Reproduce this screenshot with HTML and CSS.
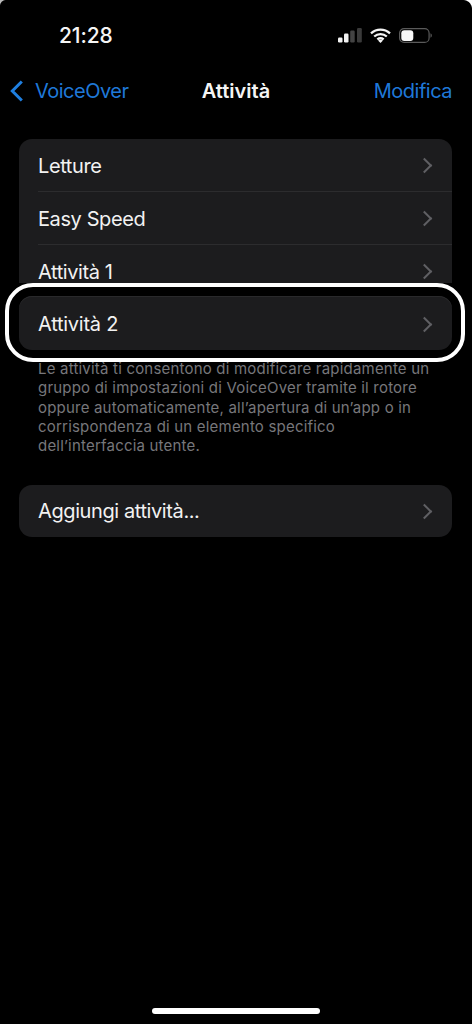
FILE: index.html
```html
<!DOCTYPE html>
<html lang="it">
<head>
<meta charset="utf-8">
<title>Attività</title>
<link rel="stylesheet" href="styles.css">
</head>
<body>
<div class="screen">
  <header class="status">
    <span class="time">21:28</span>
    <div class="status-icons">
      <svg width="24" height="15" viewBox="0 0 24 15"><rect x="0" y="9.500" width="4.500" height="5" rx="1.200" fill="#f2f2f2"/><rect x="6" y="5.500" width="4.500" height="9" rx="1.200" fill="#f2f2f2"/><rect x="12.200" y="2.500" width="4.500" height="12" rx="1.200" fill="#444"/><rect x="19" y="0" width="4.800" height="14.500" rx="1.200" fill="#3a3a3a"/></svg>
      <svg width="21" height="15" viewBox="0 0 21 15"><path d="M1 5.300C6.500.3 14.500.3 20 5.300M4.200 8.500c3.600-3.200 9-3.200 12.600 0M7.300 11.400c2-1.500 4.400-1.500 6.400 0" fill="none" stroke="#f5f5f5" stroke-width="2.300"/><path d="M10.500 15 8 12.400c1.500-.9 3.500-.9 5 0z" fill="#f5f5f5"/></svg>
      <svg width="33" height="15" viewBox="0 0 33 15"><rect x=".6" y=".6" width="29.500" height="13.800" rx="4.500" fill="none" stroke="#5a5a5a" stroke-width="1.200"/><rect x="2.300" y="2.200" width="12" height="10.800" rx="3" fill="#f7f7f7"/><path d="M31.500 5.200c1 .5 1.300 1.300 1.300 2.300s-.3 1.800-1.300 2.300z" fill="#5a5a5a"/></svg>
    </div>
  </header>
  <nav class="nav">
    <a class="back">
      <svg width="15" height="22" viewBox="0 0 15 22"><path d="M12.800 1.500 3.300 11l9.500 9.500" fill="none" stroke="#1f7fe0" stroke-width="3"/></svg>
      <span>VoiceOver</span>
    </a>
    <h1 class="title">Attività</h1>
    <a class="edit">Modifica</a>
  </nav>
  <main class="content">
    <section class="card card-top">
      <div class="row"><span>Letture</span><i class="chev"></i></div>
      <div class="row"><span>Easy Speed</span><i class="chev"></i></div>
      <div class="row"><span>Attività 1</span><i class="chev"></i></div>
    </section>
    <div class="ring">
      <div class="card ring-card">
        <div class="row row-ring"><span>Attività 2</span><i class="chev"></i></div>
      </div>
    </div>
    <p class="note">Le attività ti consentono di modificare rapidamente un gruppo di impostazioni di VoiceOver tramite il rotore oppure automaticamente, all’apertura di un’app o in corrispondenza di un elemento specifico dell’interfaccia utente.</p>
    <section class="card card-add">
      <div class="row row-add"><span>Aggiungi attività...</span><i class="chev"></i></div>
    </section>
  </main>
  <div class="home"></div>
</div>
</body>
</html>
```
FILE: styles.css
```css
* { box-sizing: border-box; }
html, body { margin: 0; padding: 0; background: #000; }
body { font-family: Inter, "Noto Sans", "Liberation Sans", sans-serif; color: #f5f5f5; }
.screen { width: 472px; height: 1024px; background: #000; display: flex; flex-direction: column; overflow: hidden; position: relative; }
.screen::before { content: ""; position: absolute; top: 0; left: 0; width: 6px; height: 6px; background: radial-gradient(circle at 100% 100%, transparent 5.500px, #bbb 6.500px); }
.screen::after { content: ""; position: absolute; top: 0; right: 0; width: 9px; height: 9px; background: radial-gradient(circle at 0 100%, transparent 8.500px, #fff 9.500px); }
.status { height: 70px; display: flex; align-items: center; justify-content: space-between; padding: 0 40px 0 59px; }
.time { font-size: 21px; font-weight: 500; color: #f5f5f5; letter-spacing: -0.1px; }
.status-icons { display: flex; align-items: center; gap: 8px; }
.nav { height: 42px; display: flex; align-items: center; justify-content: space-between; padding: 0 20px 0 9px; position: relative; }
.back { display: flex; align-items: center; gap: 11px; color: #1f78d8; font-size: 20px; letter-spacing: -0.5px; }
.edit { color: #1f78d8; font-size: 20px; letter-spacing: -0.5px; }
.title { margin: 0; font-size: 20px; font-weight: 600; color: #f5f5f5; position: absolute; left: 0; right: 0; text-align: center; }
.content { padding: 27px 20px 0 19px; display: flex; flex-direction: column; }
.card { background: #1c1c1e; }
.card-top { border-radius: 13px 13px 0 0; height: 144px; overflow: hidden; }
.row { height: 53px; display: flex; align-items: center; justify-content: space-between; padding: 0 20px 0 19px; font-size: 20px; letter-spacing: -0.4px; color: #f2f2f2; position: relative; }
.card-top .row::after { content: ""; position: absolute; left: 19px; right: 0; bottom: 0; height: 1px; background: #2c2c2e; }
.row-ring { height: 54px; padding-top: 2px; letter-spacing: -0.25px; }
.row-add { height: 52px; padding-top: 0; }
.chev { width: 11px; height: 11px; border-top: 2.600px solid #5f5f63; border-right: 2.600px solid #5f5f63; transform: rotate(45deg); margin: 0 2px 0 0; }
.ring { margin: 0 -13px 0 -14px; border: 4px solid #fff; border-radius: 28px; background: #000; height: 79px; padding: 9px 9px 0 10px; }
.ring-card { border-radius: 13px; height: 54px; box-shadow: inset 0 1px 0 #29292b; }
.note { margin: -3px 0 0; padding: 0 19px; font-size: 15px; letter-spacing: 0.2px; line-height: 19.300px; color: #77777b; position: relative; }
.card-add { border-radius: 13px; margin-top: 30px; }
.home { position: absolute; left: 152px; top: 1008px; width: 168px; height: 6px; border-radius: 3px; background: #fff; }
```
